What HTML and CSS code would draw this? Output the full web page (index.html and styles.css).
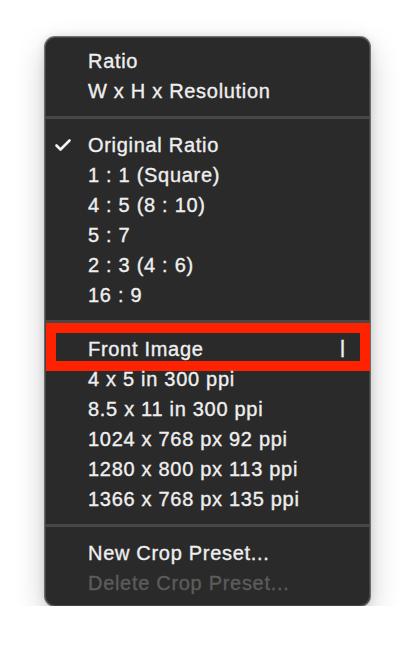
FILE: index.html
```html
<!DOCTYPE html>
<html>
<head>
<meta charset="utf-8">
<link rel="stylesheet" href="styles.css">
</head>
<body>
<div class="menu">
  <div class="section">
    <div class="item">Ratio</div>
    <div class="item">W x H x Resolution</div>
  </div>
  <div class="sep"></div>
  <div class="section">
    <div class="item checked"><svg class="check" width="16" height="12" viewBox="0 0 16 12"><path d="M1.5 6.5 L5.5 10.5 L14.5 1.5" fill="none" stroke="#f2f2f2" stroke-width="2.6" stroke-linecap="round" stroke-linejoin="round"/></svg>Original Ratio</div>
    <div class="item">1 : 1 (Square)</div>
    <div class="item">4 : 5 (8 : 10)</div>
    <div class="item">5 : 7</div>
    <div class="item">2 : 3 (4 : 6)</div>
    <div class="item">16 : 9</div>
  </div>
  <div class="sep"></div>
  <div class="section">
    <div class="item highlighted"><span>Front Image</span><span class="shortcut">I</span><div class="annot"></div></div>
    <div class="item">4 x 5 in 300 ppi</div>
    <div class="item">8.5 x 11 in 300 ppi</div>
    <div class="item">1024 x 768 px 92 ppi</div>
    <div class="item">1280 x 800 px 113 ppi</div>
    <div class="item">1366 x 768 px 135 ppi</div>
  </div>
  <div class="sep"></div>
  <div class="section">
    <div class="item">New Crop Preset...</div>
    <div class="item disabled">Delete Crop Preset...</div>
  </div>
</div>
</body>
</html>
```
FILE: styles.css
```css
html, body {
  margin: 0;
  padding: 0;
  background: #ffffff;
}
body {
  padding: 37px 0 0 45px;
  font-family: "Liberation Sans", Arial, sans-serif;
}
.menu {
  width: 325px;
  height: 569px;
  box-sizing: border-box;
  background: #2a2a2a;
  border-radius: 10px;
  padding: 9px 0;
  position: relative;
  box-shadow: 0 0 0 1px rgba(0,0,0,0.5), inset 0 0 0 1px rgba(255,255,255,0.12), 0 12px 30px rgba(0,0,0,0.22), 0 0 10px rgba(0,0,0,0.12);
}
.section {
  display: flex;
  flex-direction: column;
}
.item {
  height: 30px;
  display: flex;
  align-items: center;
  padding-left: 43px;
  padding-right: 24px;
  color: #efefef;
  font-size: 20px;
  letter-spacing: 0.7px;
  -webkit-text-stroke: 0.35px #efefef;
  position: relative;
  white-space: nowrap;
}
.item.disabled {
  color: #5c5c5c;
  -webkit-text-stroke: 0.35px #5c5c5c;
}
.check {
  position: absolute;
  left: 10px;
  top: 9px;
}
.highlighted {
  justify-content: space-between;
}
.shortcut {
  font-size: 20px;
  transform: scaleY(1.2);
  margin-right: 0;
}
.annot {
  position: absolute;
  left: 1px;
  right: 0;
  top: -11px;
  bottom: -7px;
  border: 10px solid #ff2200;
  pointer-events: none;
}
.sep {
  height: 3px;
  background: #474747;
  margin: 10px 0 11px;
}
```
